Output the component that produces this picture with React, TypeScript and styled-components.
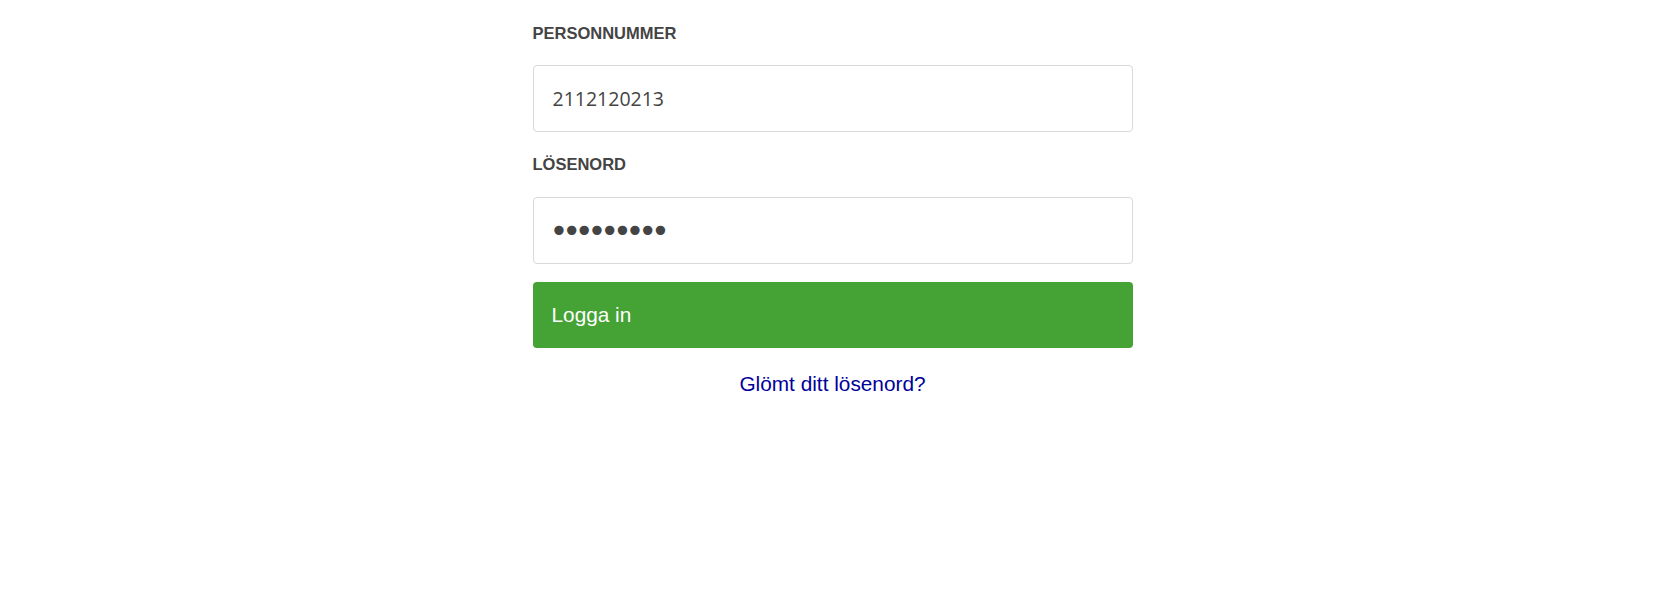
import React from "react";
import styled, { createGlobalStyle } from "styled-components";

const GlobalStyle = createGlobalStyle`
  html, body {
    margin: 0;
    padding: 0;
    background: #ffffff;
  }
  body {
    font-family: "Liberation Sans", Arial, sans-serif;
  }
  * { box-sizing: border-box; }
`;

const Page = styled.main`
  display: flex;
  justify-content: center;
  padding-top: 23px;
`;

const Form = styled.form`
  width: 600px;
  display: flex;
  flex-direction: column;
`;

const Label = styled.label<{ $gap: number }>`
  display: block;
  font-family: "Liberation Sans", Arial, sans-serif;
  font-weight: 700;
  font-size: 16.5px;
  line-height: 20px;
  color: #444444;
  text-transform: uppercase;
  margin-bottom: ${(p) => p.$gap}px;
`;

const Field = styled.input<{ $gap: number }>`
  display: block;
  width: 100%;
  height: 67px;
  margin: 0 0 ${(p) => p.$gap}px 0;
  padding: 0 19px;
  border: 1px solid #d9d9d9;
  border-radius: 4px;
  background: #ffffff;
  font-family: "Open Sans", "Segoe UI", sans-serif;
  font-size: 19.5px;
  color: #444444;
  outline: none;
`;

const PasswordField = styled(Field)`
  font-family: "DejaVu Sans", Verdana, sans-serif;
  font-size: 32px;
  letter-spacing: -6.2px;
  padding-left: 16px;
`;

const SubmitButton = styled.button`
  display: flex;
  align-items: center;
  width: 100%;
  height: 66px;
  margin: 0;
  padding: 0 19px;
  border: none;
  border-radius: 4px;
  background: #45a234;
  color: #ffffff;
  font-family: "Liberation Sans", Arial, sans-serif;
  font-size: 20.8px;
  text-align: left;
  cursor: pointer;
`;

const LinkRow = styled.div`
  display: flex;
  justify-content: center;
  margin-top: 24.3px;
`;

const ForgotLink = styled.a`
  font-family: "Liberation Sans", Arial, sans-serif;
  font-size: 20.8px;
  line-height: 24px;
  color: #00009a;
  text-decoration: none;
`;

export default function App() {
  return (
    <>
      <GlobalStyle />
      <Page>
        <Form onSubmit={(e) => e.preventDefault()}>
          <Label htmlFor="pnr" $gap={22}>Personnummer</Label>
          <Field id="pnr" type="text" defaultValue="2112120213" $gap={22.2} />
          <Label htmlFor="pwd" $gap={23}>Lösenord</Label>
          <PasswordField id="pwd" type="password" defaultValue="123456789" $gap={17.5} />
          <SubmitButton type="submit">Logga in</SubmitButton>
          <LinkRow>
            <ForgotLink href="#">Glömt ditt lösenord?</ForgotLink>
          </LinkRow>
        </Form>
      </Page>
    </>
  );
}
